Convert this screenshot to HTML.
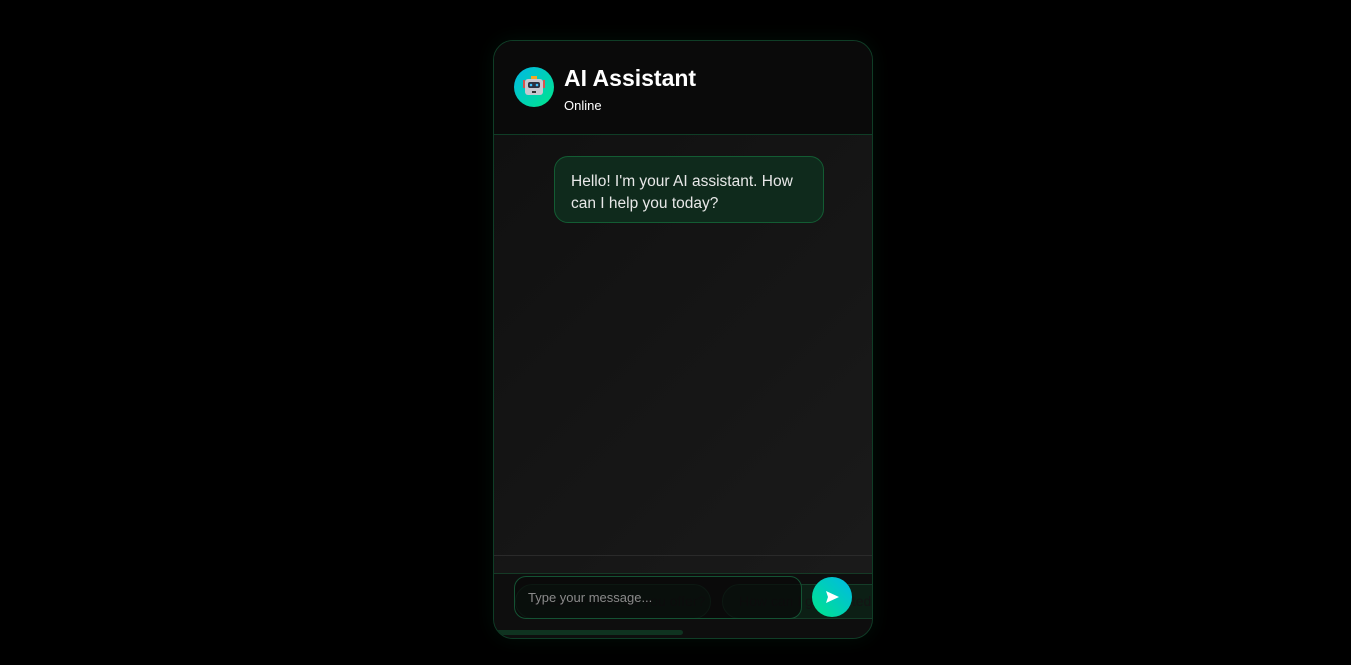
<!DOCTYPE html>
<html><head><style>
*{margin:0;padding:0;box-sizing:border-box}
body{width:1351px;height:665px;background:#000;font-family:"Liberation Sans",sans-serif;position:relative;overflow:hidden}
.card{position:absolute;left:493px;top:40px;width:380px;height:599px;border:1px solid #0f3d26;border-radius:20px;overflow:hidden;background:linear-gradient(135deg,#0f0f0f,#1b1b1b);box-shadow:0 0 20px rgba(0,255,140,0.06)}
.hdr{position:absolute;left:0;top:0;width:100%;height:94px;background:#0a0a0a;border-bottom:1px solid #0f3d26}
.av{position:absolute;left:20px;top:26px;width:40px;height:40px;border-radius:50%;background:linear-gradient(135deg,#00b8e6,#00e68a)}
.t{position:absolute;left:70px;top:24px;color:#fff;font-weight:bold;font-size:23px}
.s{position:absolute;left:70px;top:57px;color:#fff;font-size:13px}
.msg{position:absolute;left:60px;top:115px;width:270px;height:67px;border:1px solid #135c33;border-radius:14px;background:#0f2a1c;color:#e8e8e8;font-size:15.5px;line-height:22px;padding:14px 16px}
.l1{position:absolute;left:0;top:514px;width:100%;height:1px;background:#2a2a2a}
.ft{position:absolute;left:0;top:532px;width:100%;height:67px;background:#0e0e0e;border-top:1px solid #153a26}
.chip{position:absolute;top:543px;height:35px;border:1px solid #143d28;border-radius:18px;background:#0c1f15;color:#141414;font-size:14px;line-height:33px;padding-left:16px;white-space:nowrap;overflow:hidden}
.inp{position:absolute;left:20px;top:535px;width:288px;height:43px;border:1px solid #145233;border-radius:12px;background:rgba(8,8,8,0.7);color:#8a8a8a;font-size:13px;line-height:41px;padding-left:13px}
.snd{position:absolute;left:318px;top:536px;width:40px;height:40px;border-radius:50%;background:linear-gradient(45deg,#00e68a,#00b8e6)}
.bar{position:absolute;left:0;top:589px;width:189px;height:5px;border-radius:3px;background:#0f3320}
</style></head><body>
<div class="card">
<div class="hdr">
<div class="av"><svg width="40" height="40" viewBox="0 0 40 40"><rect x="11" y="12" width="18" height="16" rx="3" fill="#c8c8d0"/><rect x="14" y="15" width="12" height="6" rx="2" fill="#2a3140"/><circle cx="17" cy="18" r="1.3" fill="#3fc3ff"/><circle cx="23" cy="18" r="1.3" fill="#3fc3ff"/><rect x="17" y="9" width="6" height="3" fill="#f5a623"/><rect x="9" y="13" width="2" height="8" fill="#d9534f"/><rect x="29" y="13" width="2" height="8" fill="#d9534f"/><rect x="18" y="24" width="4" height="2" fill="#333"/></svg></div>
<div class="t">AI Assistant</div><div class="s">Online</div>
</div>
<div class="msg">Hello! I'm your AI assistant. How can I help you today?</div>
<div class="l1"></div>
<div class="ft"></div>
<div class="chip" style="left:21px;width:196px">What services do you offer?</div>
<div class="chip" style="left:228px;width:170px">How can I get started?</div>
<div class="inp">Type your message...</div>
<div class="snd"><svg width="40" height="40" viewBox="0 0 40 40"><path d="M14 14 L27 20 L14 26 L16 20 Z" fill="#fff"/></svg></div>
<div class="bar"></div>
</div>
</body></html>
